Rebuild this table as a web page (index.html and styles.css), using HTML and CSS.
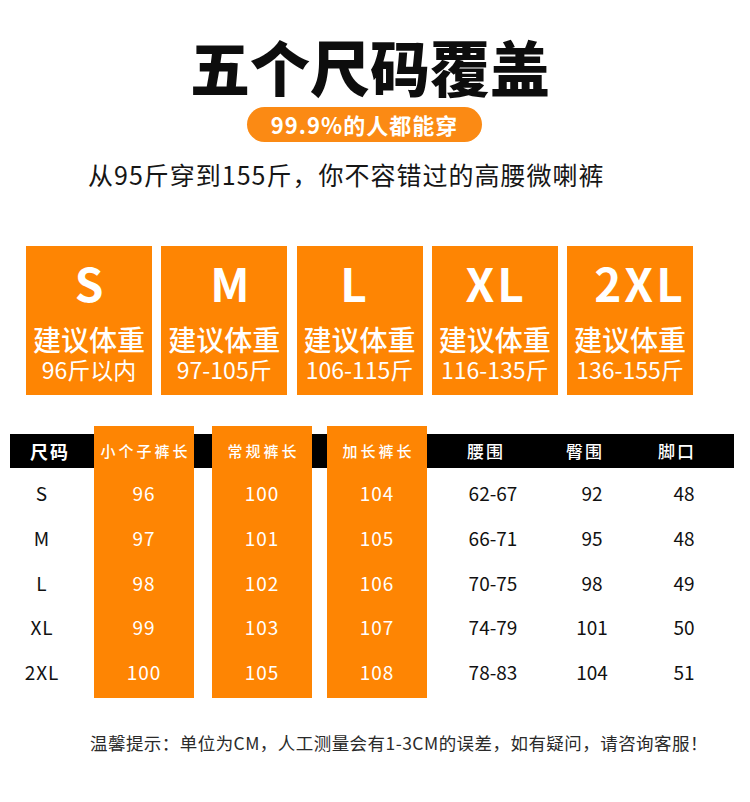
FILE: index.html
```html
<!DOCTYPE html>
<html lang="zh-CN">
<head>
<meta charset="utf-8">
<link rel="stylesheet" href="styles.css">
</head>
<body>
<div class="page">
  <h1 class="title">五个尺码覆盖</h1>
  <div class="pill">99.9%的人都能穿</div>
  <p class="subtitle">从95斤穿到155斤，你不容错过的高腰微喇裤</p>

  <div class="sizes">
    <div class="size-card"><div class="size-name">S</div><div class="size-label">建议体重</div><div class="size-range">96斤以内</div></div>
    <div class="size-card"><div class="size-name name-m">M</div><div class="size-label">建议体重</div><div class="size-range">97-105斤</div></div>
    <div class="size-card"><div class="size-name name-l">L</div><div class="size-label">建议体重</div><div class="size-range">106-115斤</div></div>
    <div class="size-card"><div class="size-name">XL</div><div class="size-label">建议体重</div><div class="size-range">116-135斤</div></div>
    <div class="size-card"><div class="size-name name-2xl">2XL</div><div class="size-label">建议体重</div><div class="size-range">136-155斤</div></div>
  </div>

  <div class="chart">
    <div class="col col-size">
      <div class="head">尺码</div>
      <div class="rows"><div class="cell">S</div><div class="cell">M</div><div class="cell">L</div><div class="cell">XL</div><div class="cell">2XL</div></div>
    </div>
    <div class="col col-orange">
      <div class="head">小个子裤长</div>
      <div class="rows"><div class="cell">96</div><div class="cell">97</div><div class="cell">98</div><div class="cell">99</div><div class="cell">100</div></div>
    </div>
    <div class="col col-gap1"><div class="head"></div></div>
    <div class="col col-orange">
      <div class="head">常规裤长</div>
      <div class="rows"><div class="cell">100</div><div class="cell">101</div><div class="cell">102</div><div class="cell">103</div><div class="cell">105</div></div>
    </div>
    <div class="col col-gap2"><div class="head"></div></div>
    <div class="col col-orange">
      <div class="head">加长裤长</div>
      <div class="rows"><div class="cell">104</div><div class="cell">105</div><div class="cell">106</div><div class="cell">107</div><div class="cell">108</div></div>
    </div>
    <div class="col col-waist">
      <div class="head">腰围</div>
      <div class="rows"><div class="cell">62-67</div><div class="cell">66-71</div><div class="cell">70-75</div><div class="cell">74-79</div><div class="cell">78-83</div></div>
    </div>
    <div class="col col-hip">
      <div class="head">臀围</div>
      <div class="rows"><div class="cell">92</div><div class="cell">95</div><div class="cell">98</div><div class="cell">101</div><div class="cell">104</div></div>
    </div>
    <div class="col col-hem">
      <div class="head">脚口</div>
      <div class="rows"><div class="cell">48</div><div class="cell">48</div><div class="cell">49</div><div class="cell">50</div><div class="cell">51</div></div>
    </div>
  </div>

  <p class="note">温馨提示：单位为CM，人工测量会有1-3CM的误差，如有疑问，请咨询客服！</p>
</div>
</body>
</html>
```

FILE: styles.css
```css
* { box-sizing: border-box; }
html, body { margin: 0; padding: 0; background: #ffffff; }
body {
  width: 750px;
  height: 802px;
  overflow: hidden;
  font-family: "Noto Sans CJK SC", "Noto Sans", sans-serif;
  color: #111111;
}
.page {
  display: flex;
  flex-direction: column;
  align-items: flex-start;
}
.title {
  margin: 36px 0 0 190px;
  font-size: 60px;
  line-height: 60px;
  font-weight: 900;
  color: #0d0d0d;
}
.pill {
  margin: 11px 0 0 247px;
  width: 235px;
  height: 35px;
  border-radius: 18px;
  background: #fb8a14;
  color: #ffffff;
  font-size: 22px;
  font-weight: 700;
  line-height: 35px;
  text-align: center;
  letter-spacing: 1px;
}
.subtitle {
  margin: 17px 0 0 88px;
  font-size: 25px;
  line-height: 30px;
  color: #161616;
  letter-spacing: 1px;
}
.sizes {
  margin: 57px 0 0 26px;
  display: grid;
  grid-template-columns: repeat(5, 126px);
  column-gap: 9.25px;
}
.size-card {
  height: 149px;
  background: #fe8503;
  color: #ffffff;
  display: flex;
  flex-direction: column;
  align-items: center;
  padding-top: 13px;
}
.size-name {
  font-size: 46px;
  line-height: 46px;
  font-weight: 700;
  letter-spacing: 3px;
  margin-right: -3px;
}
.size-name.name-m { margin-left: 11px; }
.size-name.name-l { margin-right: 9px; }
.size-name.name-2xl { margin-left: 17px; }
.size-label {
  margin-top: 20px;
  font-size: 28px;
  line-height: 28px;
  font-weight: 500;
}
.size-range {
  margin-top: 5px;
  font-size: 23px;
  line-height: 23px;
}

.chart {
  margin: 31px 0 0 10px;
  width: 724px;
  display: flex;
  align-items: flex-start;
}
.col {
  display: flex;
  flex-direction: column;
  margin-top: 8px;
}
.head {
  height: 34px;
  background: #000000;
  color: #ffffff;
  font-size: 17px;
  line-height: 34px;
  font-weight: 500;
  letter-spacing: 2px;
  text-align: center;
}
.rows {
  display: flex;
  flex-direction: column;
  padding-top: 3px;
}
.cell {
  height: 44.8px;
  line-height: 44.8px;
  font-size: 19px;
  text-align: center;
  color: #111111;
}
.col-size { width: 84px; }
.col-size .head {
  text-align: left;
  padding-left: 20px;
  font-weight: 700;
  font-size: 18px;
}
.col-size .cell { padding-right: 20px; letter-spacing: 1px; }
.col-orange {
  width: 100px;
  margin-top: 0;
  background: #fe8503;
  padding-top: 8px;
  padding-bottom: 3px;
}
.col-orange .head {
  background: transparent;
  font-size: 15px;
  letter-spacing: 3px;
  padding-left: 3px;
}
.col-orange .cell { color: #ffffff; font-size: 19px; letter-spacing: 1px; }
.col-gap1 { width: 18px; }
.col-gap2 { width: 15px; }
.col-waist { width: 132px; }
.col-hip { width: 66px; }
.col-hem { width: 109px; }
.col-waist .head, .col-hip .head { padding-right: 14px; }
.col-hem .head { padding-right: 5px; }
.col-hem .cell { padding-left: 9px; }

.note {
  margin: 33px 0 0 90px;
  font-size: 17.5px;
  line-height: 24px;
  color: #2a2a2a;
  letter-spacing: 0.45px;
}
```
